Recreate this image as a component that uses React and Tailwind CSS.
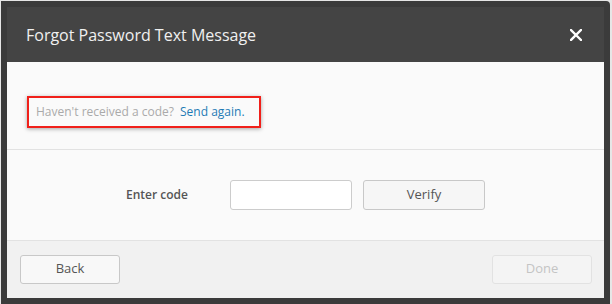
import React from "react";

export default function App() {
  return (
    <div className="w-[612px] h-[304px] bg-[#e6e6e6] pl-[1px] pt-[1px] overflow-hidden" style={{ fontFamily: "'Open Sans', 'Liberation Sans', sans-serif" }}>
      <div className="w-[609px] h-[303px] border-[6px] border-[#3b3b3b] rounded-tr-[4px] flex flex-col bg-[#fafafa]">
        <div className="h-[55px] shrink-0 bg-[#444444] flex items-center justify-between pl-[19px] pr-[22px]">
          <span className="text-[16px] text-[#f0f0f0]">Forgot Password Text Message</span>
          <svg width="12" height="12" viewBox="0 0 12 12">
            <path d="M1 1 L11 11 M11 1 L1 11" stroke="#ffffff" strokeWidth="2.4" strokeLinecap="square" />
          </svg>
        </div>
        <div className="h-[88px] shrink-0 border-b border-[#e2e2e2] pl-[20px] pt-[34px]">
          <div className="inline-flex items-center w-[234px] h-[32px] border-2 border-[#f0201a] pl-[7px] shadow-[0_1px_4px_rgba(0,0,0,0.35)] text-[12px]">
            <span className="text-[#aaaaaa]">Haven't received a code?</span>
            <span className="text-[#1f7ab5] ml-[6px]">Send again.</span>
          </div>
        </div>
        <div className="h-[91px] shrink-0 border-b border-[#e2e2e2] flex items-center pl-[119px] pb-[1px]">
          <span className="w-[104px] text-[12px] font-semibold text-[#555555]">Enter code</span>
          <div className="w-[122px] h-[30px] bg-white border border-[#cccccc] rounded-[3px]" />
          <button className="ml-[11px] w-[122px] h-[30px] bg-[#f6f6f6] border border-[#c8c8c8] rounded-[3px] text-[13px] text-[#555555]">Verify</button>
        </div>
        <div className="flex-1 bg-[#f1f1f1] flex items-center justify-between pl-[13px] pr-[12px] pb-[1px]">
          <button className="w-[100px] h-[29px] bg-[#f8f8f8] border border-[#c8c8c8] rounded-[3px] text-[13px] text-[#555555]">Back</button>
          <button className="w-[100px] h-[29px] bg-[#f4f4f4] border border-[#e2e2e2] rounded-[3px] text-[13px] text-[#c4c4c4]">Done</button>
        </div>
      </div>
    </div>
  );
}
